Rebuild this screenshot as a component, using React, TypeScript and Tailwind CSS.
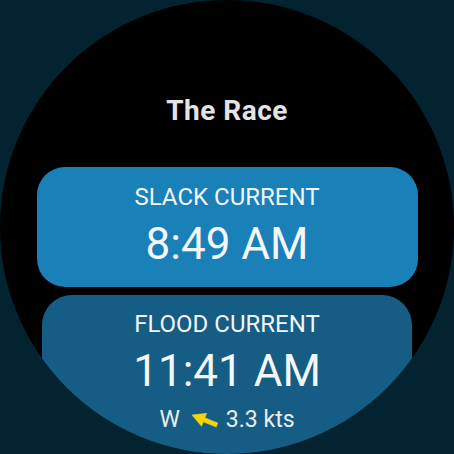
import React from 'react'

interface CurrentCardProps {
    label: string
    time: string
    tone: 'slack' | 'flood'
    children?: React.ReactNode
}

// Yellow arrow showing the set of the current (points to where it flows)
function SetArrow() {
    return (
        <svg width="26" height="16" viewBox="0 0 26 16" className="ml-[12px] mr-[8px] shrink-0">
            <path
                d="M0 3 L14.7 1.3 L12.9 5.8 L25.8 11 L24.2 15 L11.3 9.8 L9.5 14.3 Z"
                fill="#f4d20c"
                stroke="#f4d20c"
                strokeWidth="0.6"
                strokeLinejoin="round"
            />
        </svg>
    )
}

function CurrentCard({ label, time, tone, children }: CurrentCardProps) {
    const isSlack = tone === 'slack'
    return (
        <div
            className={
                isSlack
                    ? 'flex flex-col items-center w-[381px] h-[120px] rounded-[28px] bg-[#1a80b8] pt-[18px]'
                    : 'flex flex-col items-center w-[370px] h-[200px] rounded-[30px] bg-[#155d84] pt-[17px]'
            }
        >
            <div className="text-[24px] leading-[24px] text-[#f2f6f8]">{label}</div>
            <div className="mt-[13px] text-[44px] leading-[44px] text-[#f4f7f9]">{time}</div>
            {children}
        </div>
    )
}

export default function App() {
    return (
        <div
            className="w-[454px] h-[454px] bg-[#042330] overflow-hidden"
            style={{ fontFamily: 'Roboto, "Noto Sans", sans-serif' }}
        >
            <div className="w-[454px] h-[454px] rounded-full bg-black overflow-hidden flex flex-col items-center">
                <h1 className="mt-[96px] text-[28px] leading-[30px] tracking-[0.5px] font-bold text-[#e4e4e4]">The Race</h1>

                <div className="mt-[41px] flex flex-col items-center gap-[8px]">
                    <CurrentCard label="SLACK CURRENT" time="8:49 AM" tone="slack" />
                    <CurrentCard label="FLOOD CURRENT" time="11:41 AM" tone="flood">
                        <div className="mt-[15px] flex items-center text-[23px] leading-[23px] text-[#e8eef2]">
                            <span>W</span>
                            <SetArrow />
                            <span>3.3 kts</span>
                        </div>
                    </CurrentCard>
                </div>
            </div>
        </div>
    )
}
